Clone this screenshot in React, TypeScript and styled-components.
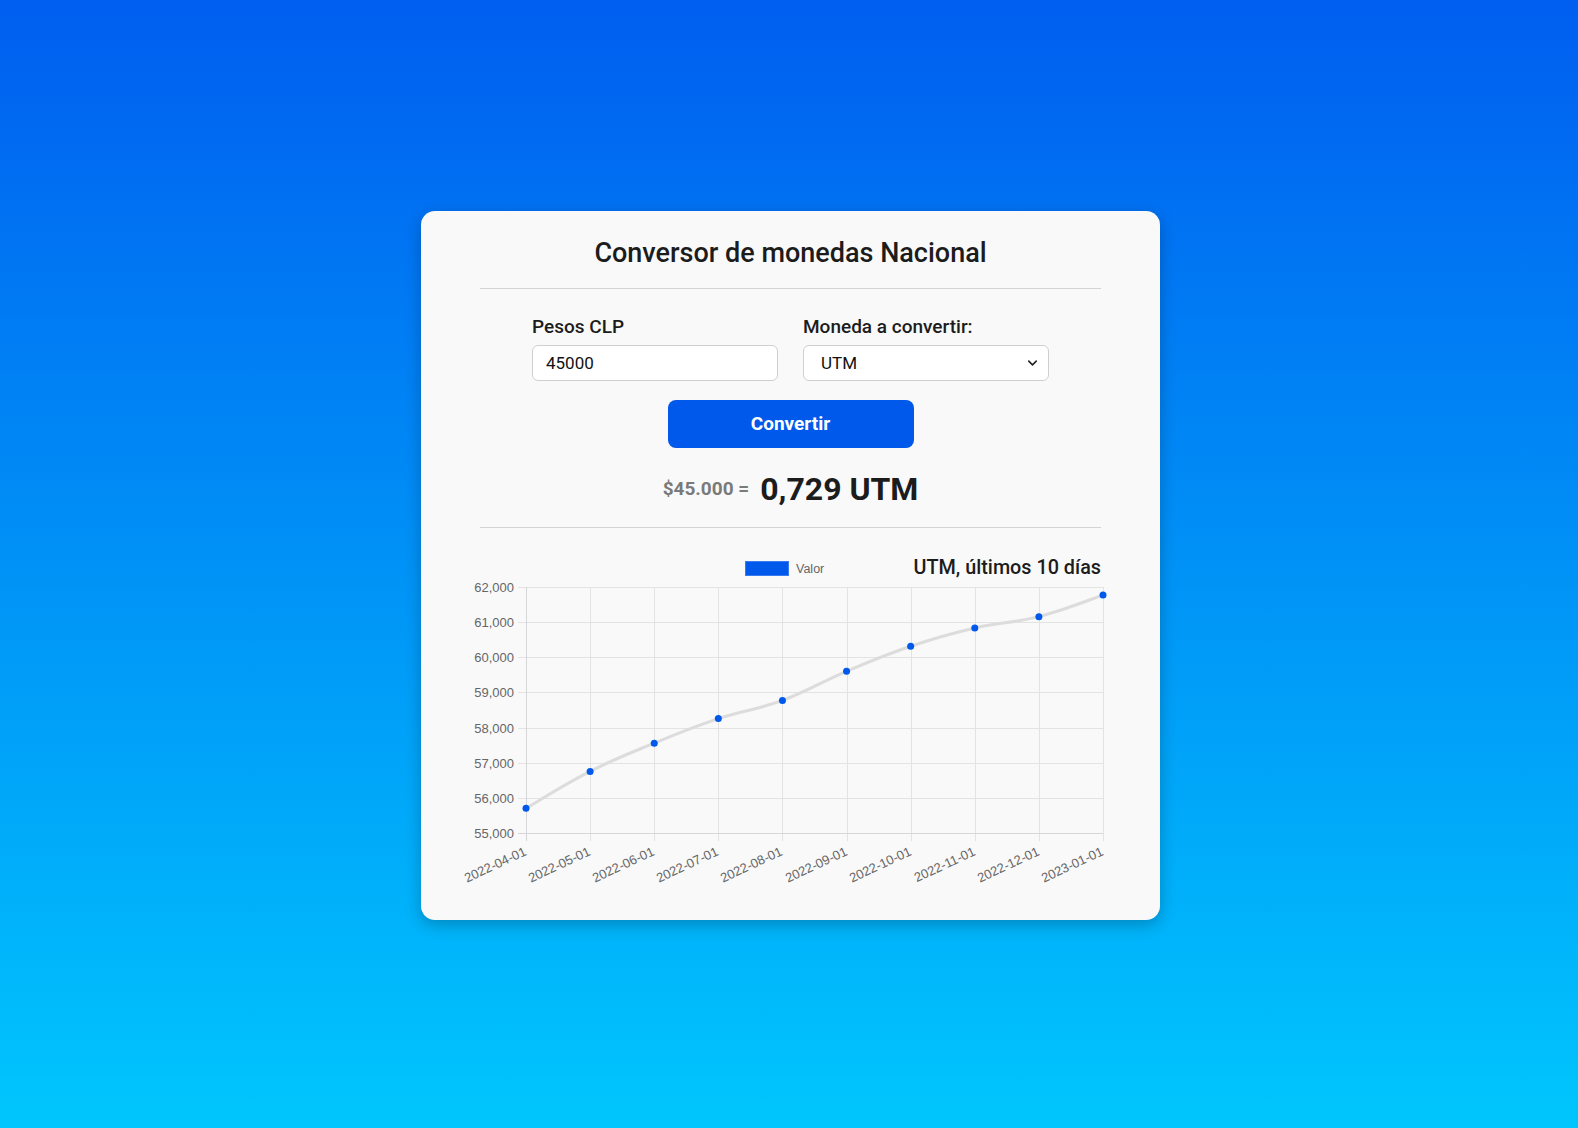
import React from "react";
import styled, { createGlobalStyle } from "styled-components";
import { ChevronDown } from "lucide-react";

const GlobalStyle = createGlobalStyle`
  html, body { margin: 0; padding: 0; height: 100%; }
  body {
    background: linear-gradient(180deg, #005ef0 0%, #00c6fd 100%);
    font-family: Roboto, "Liberation Sans", Arial, sans-serif;
    color: #222;
  }
  * { box-sizing: border-box; }
`;

const Page = styled.div`
  min-height: 100vh;
  padding: 2px 0 0 3px;
  display: flex;
  align-items: center;
  justify-content: center;
`;

const Card = styled.div`
  width: 739px;
  background: #f9f9f9;
  border-radius: 14px;
  box-shadow: 0 5px 16px rgba(0, 0, 0, 0.24);
  padding: 25px 59px 18px;
  display: flex;
  flex-direction: column;
  align-items: center;
`;

const Title = styled.h1`
  margin: 0;
  font-size: 27px;
  line-height: 34px;
  font-weight: 500;
  color: #1c1c1c;
`;

const Divider = styled.hr<{ $top: number }>`
  width: 100%;
  margin: ${(p) => p.$top}px 0 0;
  border: none;
  border-top: 1px solid #d4d4d4;
`;

const FormRow = styled.div`
  margin-top: 27px;
  display: flex;
  gap: 25px;
`;

const Field = styled.label`
  display: flex;
  flex-direction: column;
  gap: 7px;
  width: 246px;
`;

const LabelText = styled.span`
  font-size: 19px;
  line-height: 22px;
  font-weight: 500;
  color: #1c1c1c;
`;

const Input = styled.input`
  height: 36px;
  width: 100%;
  border: 1px solid #cfcfcf;
  border-radius: 6px;
  background: #fff;
  padding: 0 13px;
  font-family: Roboto, "Liberation Sans", sans-serif;
  font-size: 17px;
  color: #111;
  outline: none;
`;

const SelectWrap = styled.div`
  position: relative;
  width: 100%;
`;

const Select = styled.select`
  appearance: none;
  -webkit-appearance: none;
  height: 36px;
  width: 100%;
  border: 1px solid #cfcfcf;
  border-radius: 6px;
  background: #fff;
  padding: 0 17px;
  font-family: Roboto, "Liberation Sans", sans-serif;
  font-size: 17px;
  color: #111;
  outline: none;
`;

const Chevron = styled(ChevronDown)`
  position: absolute;
  right: 9px;
  top: 50%;
  transform: translateY(-50%);
  pointer-events: none;
  color: #222;
`;

const Button = styled.button`
  margin-top: 19px;
  width: 246px;
  height: 48px;
  border: none;
  border-radius: 8px;
  background: #0059ea;
  color: #fff;
  font-family: Roboto, "Liberation Sans", sans-serif;
  font-size: 19px;
  font-weight: 700;
  cursor: pointer;
`;

const Result = styled.div`
  margin-top: 22px;
  height: 38px;
  display: flex;
  align-items: center;
  gap: 11px;
`;

const ResultFrom = styled.span`
  font-size: 19px;
  font-weight: 700;
  color: #7a7a7a;
`;

const ResultTo = styled.span`
  font-size: 32px;
  line-height: 38px;
  font-weight: 700;
  color: #1c1c1c;
`;

const ChartBox = styled.div`
  margin: 9px -30px 0;
  width: 680px;
  height: 365px;
`;

const labels = [
  "2022-04-01",
  "2022-05-01",
  "2022-06-01",
  "2022-07-01",
  "2022-08-01",
  "2022-09-01",
  "2022-10-01",
  "2022-11-01",
  "2022-12-01",
  "2023-01-01",
];
const values = [55703, 56753, 57557, 58255, 58772, 59602, 60313, 60833, 61157, 61769];

const X0 = 75;
const X1 = 652;
const Y0 = 50; // 62000
const Y1 = 296; // 55000
const xs = labels.map((_, i) => X0 + ((X1 - X0) * i) / 9);
const yOf = (v: number) => Y1 - ((v - 55000) / 7000) * (Y1 - Y0);
const pts = values.map((v, i) => [xs[i], yOf(v)] as [number, number]);

function smoothPath(p: [number, number][]) {
  const t = 0.2;
  let d = `M${p[0][0]},${p[0][1]}`;
  for (let i = 0; i < p.length - 1; i++) {
    const p0 = p[i - 1] || p[i];
    const p1 = p[i];
    const p2 = p[i + 1];
    const p3 = p[i + 2] || p2;
    const c1x = p1[0] + (p2[0] - p0[0]) * t;
    const c1y = p1[1] + (p2[1] - p0[1]) * t;
    const c2x = p2[0] - (p3[0] - p1[0]) * t;
    const c2y = p2[1] - (p3[1] - p1[1]) * t;
    d += ` C${c1x},${c1y} ${c2x},${c2y} ${p2[0]},${p2[1]}`;
  }
  return d;
}

const yTicks = [62000, 61000, 60000, 59000, 58000, 57000, 56000, 55000];

function Chart() {
  const grid = "#e3e3e3";
  const tickFont = "'Liberation Sans', Arial, sans-serif";
  return (
    <svg width="680" height="365" viewBox="0 0 680 365">
      {/* legend */}
      <rect x="294.5" y="24.5" width="43" height="14" fill="#0059ea" stroke="#3a7cf0" />
      <text x="345" y="36" fontSize="12.5" fill="#666" fontFamily={tickFont}>
        Valor
      </text>
      <text
        x="650"
        y="37"
        textAnchor="end"
        fontSize="19.8"
        fontWeight="500"
        fill="#1c1c1c"
        fontFamily="Roboto, 'Liberation Sans', sans-serif"
      >
        UTM, últimos 10 días
      </text>
      {/* horizontal grid */}
      {yTicks.map((v) => {
        const y = Math.round(yOf(v)) + 0.5;
        return (
          <g key={v}>
            <line x1={X0 - 8} x2={X1} y1={y} y2={y} stroke={grid} strokeWidth="1" />
            <text
              x={X0 - 12}
              y={y + 4.5}
              textAnchor="end"
              fontSize="13"
              fill="#666"
              fontFamily={tickFont}
            >
              {v.toLocaleString("en-US")}
            </text>
          </g>
        );
      })}
      {/* vertical grid */}
      {xs.map((x, i) => {
        const xx = Math.round(x) + 0.5;
        return (
          <g key={i}>
            <line x1={xx} x2={xx} y1={Y0} y2={Y1 + 8} stroke={grid} strokeWidth="1" />
            <text
              transform={`translate(${xx - 1},${Y1 + 18}) rotate(-25)`}
              textAnchor="end"
              dy="4"
              fontSize="13"
              fill="#666"
              fontFamily={tickFont}
            >
              {labels[i]}
            </text>
          </g>
        );
      })}
      <line x1={X0 + 0.5} x2={X0 + 0.5} y1={Y0} y2={Y1 + 8} stroke="#d6d6d6" />
      <line x1={X0 - 8} x2={X1} y1={Math.round(Y1) + 0.5} y2={Math.round(Y1) + 0.5} stroke="#d6d6d6" />
      <path d={smoothPath(pts)} fill="none" stroke="#dcdcdc" strokeWidth="3" />
      {pts.map(([x, y], i) => (
        <circle key={i} cx={x} cy={y} r="3.5" fill="#0059ea" />
      ))}
    </svg>
  );
}

export default function App() {
  return (
    <>
      <GlobalStyle />
      <Page>
        <Card>
          <Title>Conversor de monedas Nacional</Title>
          <Divider $top={18} />
          <FormRow>
            <Field>
              <LabelText>Pesos CLP</LabelText>
              <Input defaultValue="45000" />
            </Field>
            <Field as="div">
              <LabelText>Moneda a convertir:</LabelText>
              <SelectWrap>
                <Select defaultValue="utm">
                  <option value="utm">UTM</option>
                  <option value="uf">UF</option>
                  <option value="dolar">Dólar</option>
                  <option value="euro">Euro</option>
                </Select>
                <Chevron size={15} strokeWidth={2.5} />
              </SelectWrap>
            </Field>
          </FormRow>
          <Button>Convertir</Button>
          <Result>
            <ResultFrom>$45.000 =</ResultFrom>
            <ResultTo>0,729 UTM</ResultTo>
          </Result>
          <Divider $top={19} />
          <ChartBox>
            <Chart />
          </ChartBox>
        </Card>
      </Page>
    </>
  );
}
